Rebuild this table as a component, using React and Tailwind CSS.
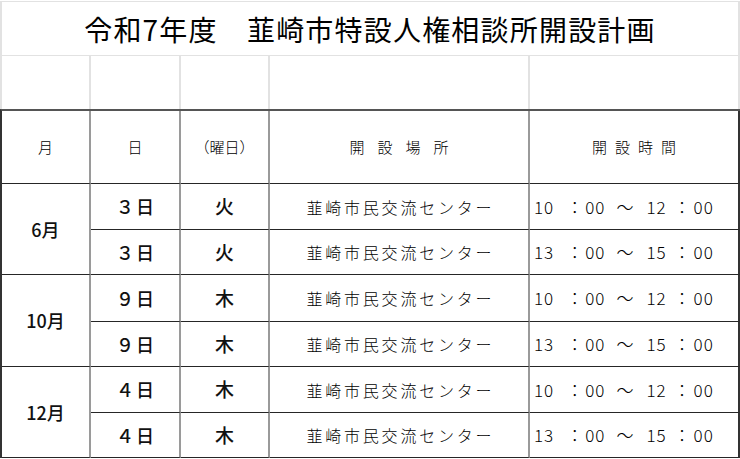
const schedule = [
  {
    month: "6月",
    rows: [
      { day: "３日", dow: "火", from: "10", to: "12" },
      { day: "３日", dow: "火", from: "13", to: "15" },
    ],
  },
  {
    month: "10月",
    rows: [
      { day: "９日", dow: "木", from: "10", to: "12" },
      { day: "９日", dow: "木", from: "13", to: "15" },
    ],
  },
  {
    month: "12月",
    rows: [
      { day: "４日", dow: "木", from: "10", to: "12" },
      { day: "４日", dow: "木", from: "13", to: "15" },
    ],
  },
];

// heights of the six data rows, bottom border included
const rowHeights = ["h-[46px]", "h-[45px]", "h-[47px]", "h-[45px]", "h-[46px]", "h-[45px]"];

const font = "font-['Noto_Sans_CJK_JP','Noto_Sans',sans-serif]";
const cell = "flex items-center justify-center border-r-2 border-r-[#9a9a9a] border-b border-b-[#262626]";

const TimeText = ({ from, to }) => (
  <div className="flex items-center whitespace-pre pl-[4px] text-[17px] font-light text-black">
    <span className="tracking-[1px]">{from}</span>
    <span className="ml-[12px]">：</span>
    <span className="ml-[2px] tracking-[1px]">00</span>
    <span className="ml-[11px]">〜</span>
    <span className="ml-[13px] tracking-[1px]">{to}</span>
    <span className="ml-[7px]">：</span>
    <span className="ml-[3px] tracking-[1px]">00</span>
  </div>
);

const App = () => {
  let rowIndex = 0;
  return (
    <div className={`w-[740px] h-[459px] bg-white pt-px ${font} text-[#111]`}>
      <div className="flex h-[55px] items-center justify-center border-x-2 border-y border-[#e2e2e2] text-[28px] font-normal tracking-[1.2px] text-black">
        令和7年度　韮崎市特設人権相談所開設計画
      </div>

      <div className="grid h-[53px] grid-cols-[89px_90px_89px_260px_210px] border-l-2 border-l-[#e2e2e2]">
        <div className="border-r-2 border-r-[#e2e2e2]" />
        <div className="border-r-2 border-r-[#e2e2e2]" />
        <div className="border-r-2 border-r-[#e2e2e2]" />
        <div className="border-r-2 border-r-[#e2e2e2]" />
        <div className="border-r-2 border-r-[#e2e2e2]" />
      </div>

      <div className="grid grid-cols-[89px_90px_89px_260px_210px] border-l-2 border-t-2 border-l-[#333] border-t-[#555]">
        <div className={`${cell} h-[73px] text-[15px] font-light text-black`}>月</div>
        <div className={`${cell} text-[15px] font-light text-black`}>日</div>
        <div className={`${cell} text-[15px] font-light text-black`}>（曜日）</div>
        <div className={`${cell} text-[15px] font-light text-black tracking-[13px] pl-[13px]`}>開設場所</div>
        <div className={`${cell} border-r-[#333] text-[15px] font-light text-black tracking-[8px] pl-[8px]`}>開設時間</div>

        {schedule.map((group) => (
          <div key={group.month} className="contents">
            <div className={`${cell} row-span-2 text-[18px] font-medium`}>{group.month}</div>
            {group.rows.map((row, i) => {
              const h = rowHeights[rowIndex++];
              return (
                <div key={i} className="contents">
                  <div className={`${cell} ${h} text-[18px] font-medium tracking-[2px] pl-[2px]`}>{row.day}</div>
                  <div className={`${cell} text-[19px] font-medium`}>{row.dow}</div>
                  <div className={`${cell} text-[16px] font-light text-black tracking-[2.8px] pl-[2.8px]`}>
                    韮崎市民交流センター
                  </div>
                  <div className={`${cell} justify-start border-r-[#333]`}>
                    <TimeText from={row.from} to={row.to} />
                  </div>
                </div>
              );
            })}
          </div>
        ))}
      </div>
    </div>
  );
};

export default App;
